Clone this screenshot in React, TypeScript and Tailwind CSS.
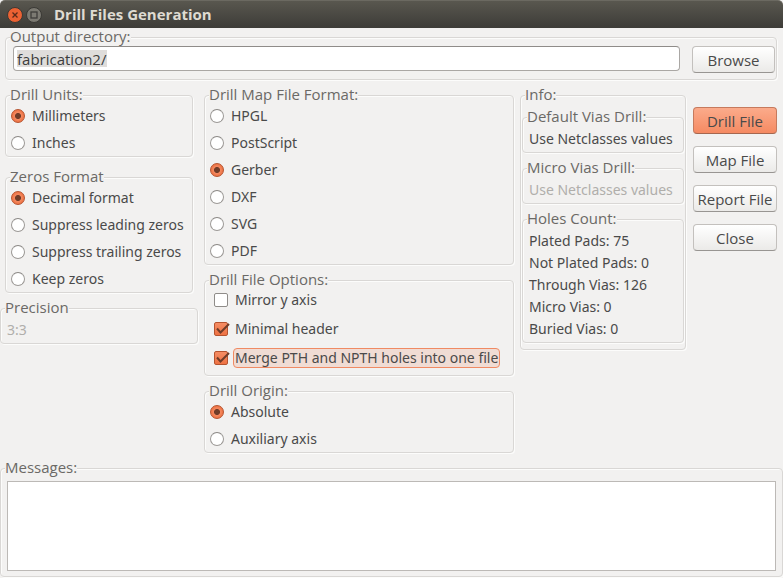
import { useState, type ReactNode } from "react";

function Frame({ title, className = "", children }: { title: string; className?: string; children: ReactNode }) {
  return (
    <fieldset className={`min-w-0 rounded-[4px] border border-[#d9d7d5] shadow-[1px_1px_0_#fcfcfb,inset_1px_1px_0_#fcfcfb] ${className}`}>
      <legend className="ml-1 h-[17px] bg-[#f2f1f0] font-['Open_Sans',sans-serif] text-[15px] leading-[15px] text-[#6b6966]">{title}</legend>
      {children}
    </fieldset>
  );
}

function RadioFrame({ title, name, options, initial, className = "" }: { title: string; name: string; options: string[]; initial: string; className?: string }) {
  const [value, setValue] = useState(initial);
  return (
    <Frame title={title} className={`pt-px pb-[2px] ${className}`}>
      <div className="flex flex-col gap-[5px] pl-[5px]">
        {options.map((o) => (
          <label key={o} className="flex h-[22px] items-center gap-[7px] leading-5 whitespace-nowrap">
            <input
              type="radio"
              name={name}
              checked={value === o}
              onChange={() => setValue(o)}
              className="size-[14px] shrink-0 appearance-none rounded-full border border-[#9c9996] border-t-[#8a8784] bg-white checked:border-[#b5532f] checked:bg-[radial-gradient(circle,#703c28_0,#703c28_2.6px,#f4885f_3.4px,#ee7445_6px)]"
            />
            {o}
          </label>
        ))}
      </div>
    </Frame>
  );
}

function Check({ label, initial = false, focused = false }: { label: string; initial?: boolean; focused?: boolean }) {
  const [on, setOn] = useState(initial);
  return (
    <label className="flex h-5 items-center gap-[5px] whitespace-nowrap">
      <span className="relative size-[14px] shrink-0">
        <input
          type="checkbox"
          checked={on}
          onChange={() => setOn(!on)}
          className="block size-[14px] appearance-none rounded-[2px] border border-[#8f8c89] bg-white checked:border-[#b5532f] checked:bg-linear-to-b checked:from-[#f58d64] checked:to-[#ee7243]"
        />
        {on && (
          <svg viewBox="0 0 16 14" className="pointer-events-none absolute top-0 left-0 h-[14px] w-4" aria-hidden="true">
            <path d="M3 6.5 L6.5 10.5 L15 2" fill="none" stroke="#703c28" strokeWidth="2" />
          </svg>
        )}
      </span>
      <span className={`rounded-[4px] border px-px leading-[18px] ${focused ? "border-[#f08a63] bg-[#f0dcd4]" : "border-transparent"}`}>{label}</span>
    </label>
  );
}

function PushButton({ children, primary = false, className = "" }: { children: ReactNode; primary?: boolean; className?: string }) {
  const look = primary
    ? "border-[#c67a5d] border-b-[#a5674f] from-[#fbab8b] to-[#f58a62]"
    : "border-[#c3c0bd] border-b-[#989592] from-white to-[#ebeae8]";
  return (
    <button type="button" className={`h-[27px] rounded-[4px] border bg-linear-to-b text-center font-['Open_Sans',sans-serif] text-[15px] leading-6 whitespace-nowrap ${look} ${className}`}>
      {children}
    </button>
  );
}

const holes = ["Plated Pads: 75", "Not Plated Pads: 0", "Through Vias: 126", "Micro Vias: 0", "Buried Vias: 0"];

export default function App() {
  const [dir, setDir] = useState("fabrication2/");
  return (
    <div className="flex min-h-screen flex-col bg-[#f2f1f0] font-['Noto_Sans',sans-serif] text-[14px] text-[#4a4a4a]">
      <header className="flex h-7 items-center rounded-t-[5px] border-t border-[#6b6961] bg-linear-to-b from-[#59574f] to-[#3d3c38] pl-[7px]">
        <button type="button" aria-label="Close window" className="size-4">
          <svg viewBox="0 0 16 16" className="size-4">
            <circle cx="8" cy="8" r="7.5" fill="#ec6233" stroke="#3a3935" />
            <path d="M5.5 5.5l5 5M10.5 5.5l-5 5" stroke="#5a2b1a" strokeWidth="1.3" />
          </svg>
        </button>
        <button type="button" aria-label="Maximize window" className="ml-[3px] size-4">
          <svg viewBox="0 0 16 16" className="size-4">
            <circle cx="8" cy="8" r="7.5" fill="#7c7a72" stroke="#3a3935" />
            <rect x="5" y="5" width="6" height="6" fill="none" stroke="#3e3d39" strokeWidth="1.3" />
          </svg>
        </button>
        <h1 className="ml-3 font-['Open_Sans',sans-serif] text-[15px] font-bold text-[#dfdbd2]">Drill Files Generation</h1>
      </header>

      <main className="flex grow flex-col gap-[7px] pt-px">
        <Frame title="Output directory:" className="mr-[6px] ml-[5px] pb-[6px]">
          <div className="flex items-start gap-3 pr-px pl-[7px]">
            <input
              aria-label="Output directory"
              value={dir}
              onChange={(e) => setDir(e.target.value)}
              className="h-[25px] min-w-0 grow rounded-[4px] border border-[#aaa7a4] border-t-[#8f8c89] bg-[linear-gradient(#dfdddb,#dfdddb)] bg-[length:90px_17px] bg-[position:3px_3px] bg-no-repeat bg-white px-[3px] font-['Open_Sans',sans-serif] text-[15px] text-[#3c3c3c] outline-none"
            />
            <PushButton className="w-[83px]">Browse</PushButton>
          </div>
        </Frame>

        <div className="grid grid-cols-[198px_1fr_166px_85px] items-start gap-x-1.5 pr-1.5">
          <div className="flex flex-col">
            <RadioFrame title="Drill Units:" name="units" options={["Millimeters", "Inches"]} initial="Millimeters" className="mx-[5px]" />
            <RadioFrame
              title="Zeros Format"
              name="zeros"
              options={["Decimal format", "Suppress leading zeros", "Suppress trailing zeros", "Keep zeros"]}
              initial="Decimal format"
              className="mx-[5px] mt-3"
            />
            <Frame title="Precision" className="mt-[7px] py-[2px]">
              <p className="pl-[6px] leading-[22px] text-[#b0aeab]">3:3</p>
            </Frame>
          </div>

          <div className="flex flex-col gap-[7px]">
            <RadioFrame title="Drill Map File Format:" name="map" options={["HPGL", "PostScript", "Gerber", "DXF", "SVG", "PDF"]} initial="Gerber" />
            <Frame title="Drill File Options:" className="pt-px pb-[7px]">
              <div className="flex flex-col gap-[9px] pl-[9px]">
                <Check label="Mirror y axis" />
                <Check label="Minimal header" initial />
                <Check label="Merge PTH and NPTH holes into one file" initial focused />
              </div>
            </Frame>
            <RadioFrame title="Drill Origin:" name="origin" options={["Absolute", "Auxiliary axis"]} initial="Absolute" />
          </div>

          <Frame title="Info:" className="pb-[6px]">
            <div className="flex flex-col gap-[7px] px-px pt-[5px] leading-[22px] whitespace-nowrap">
              <Frame title="Default Vias Drill:" className="py-[2px]">
                <p className="pl-[6px]">Use Netclasses values</p>
              </Frame>
              <Frame title="Micro Vias Drill:" className="py-[2px]">
                <p className="pl-[6px] text-[#b0aeab]">Use Netclasses values</p>
              </Frame>
              <Frame title="Holes Count:" className="py-[2px]">
                <ul className="pl-[6px]">
                  {holes.map((h) => (
                    <li key={h}>{h}</li>
                  ))}
                </ul>
              </Frame>
            </div>
          </Frame>

          <div className="flex flex-col gap-3 pt-5 pl-px">
            <PushButton primary>Drill File</PushButton>
            <PushButton>Map File</PushButton>
            <PushButton>Report File</PushButton>
            <PushButton>Close</PushButton>
          </div>
        </div>

        <Frame title="Messages:" className="pt-1 pb-[5px]">
          <div className="px-[6px]">
            <textarea aria-label="Messages" className="block h-[90px] w-full resize-none border border-[#bcb9b6] bg-white outline-none" />
          </div>
        </Frame>
      </main>
    </div>
  );
}
